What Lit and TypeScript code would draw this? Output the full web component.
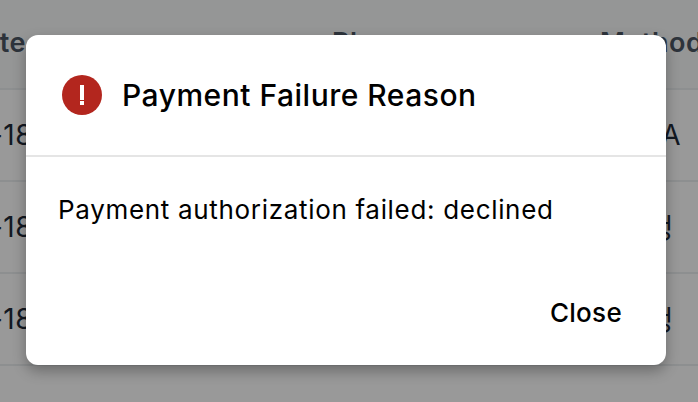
import { LitElement, html, css } from "lit";
import { customElement } from "lit/decorators.js";

const rows = [
  { pay: "VISA", ko: false },
  { pay: "간편결정", ko: true },
  { pay: "간편결정", ko: true },
];

@customElement("app-root")
export class AppRoot extends LitElement {
  static styles = css`
    :host {
      display: block;
      position: relative;
      width: 698px;
      height: 402px;
      overflow: hidden;
      background: #fff;
      font-family: Inter, "Noto Sans CJK KR", sans-serif;
    }
    .table { display: flex; flex-direction: column; }
    .row {
      display: grid;
      grid-template-columns: 332px 268px 98px;
      height: 92px;
      box-sizing: border-box;
      border-bottom: 2px solid #eceef1;
      align-items: center;
      font-size: 28px;
      letter-spacing: 0.5px;
      color: #1f2937;
      white-space: nowrap;
    }
    .row > span { min-width: 0; overflow: hidden; }
    .head {
      height: 90px;
      background: #f9fafb;
      font-size: 27px;
      font-weight: 600;
      color: #4b5563;
      align-items: start;
      padding-top: 26px;
    }
    .date { display: flex; justify-content: flex-end; padding-right: 299px; }
    .head .date { padding-right: 306px; }
    .pay { display: flex; justify-content: flex-end; padding-right: 17px; }
    .pay.ko { padding-right: 24px; }
    .overlay {
      position: absolute;
      inset: 0;
      padding-right: 6px;
      background: rgba(0, 0, 0, 0.4);
      display: flex;
      align-items: center;
      justify-content: center;
    }
    .modal {
      width: 640px;
      height: 330px;
      margin-top: -2px;
      background: #fff;
      border-radius: 12px;
      box-shadow: 0 6px 14px rgba(0, 0, 0, 0.3);
      display: flex;
      flex-direction: column;
      color: #000;
    }
    .header {
      height: 122px;
      box-sizing: border-box;
      border-bottom: 2px solid #e5e5e5;
      display: flex;
      align-items: center;
      gap: 20px;
      padding: 0 36px;
      font-size: 30px;
      font-weight: 500;
      letter-spacing: 0.5px;
    }
    .header svg { width: 40px; height: 40px; flex: none; }
    .body {
      padding: 38px 32px 0;
      font-size: 26px;
      letter-spacing: 0.68px;
      line-height: 30px;
      flex: 1;
    }
    .footer { display: flex; justify-content: flex-end; padding: 0 44px 37px; }
    .close { font-size: 26px; font-weight: 500; letter-spacing: 0.3px; line-height: 30px; }
  `;

  render() {
    return html`
      <div class="table">
        <div class="row head">
          <span class="date">Date</span><span>Phone</span><span>Method</span>
        </div>
        ${rows.map(
          (r) => html`<div class="row">
            <span class="date">2024-18</span><span></span><span class="pay ${r.ko ? "ko" : ""}">${r.pay}</span>
          </div>`
        )}
      </div>
      <div class="overlay">
        <div class="modal">
          <div class="header">
            <svg viewBox="0 0 40 40" aria-hidden="true">
              <circle cx="20" cy="20" r="20" fill="#b3261e" />
              <rect x="18" y="10" width="4" height="15" fill="#fff" />
              <rect x="18" y="26" width="4" height="4" fill="#fff" />
            </svg>
            <span>Payment Failure Reason</span>
          </div>
          <div class="body">Payment authorization failed: declined</div>
          <div class="footer"><span class="close">Close</span></div>
        </div>
      </div>
    `;
  }
}
